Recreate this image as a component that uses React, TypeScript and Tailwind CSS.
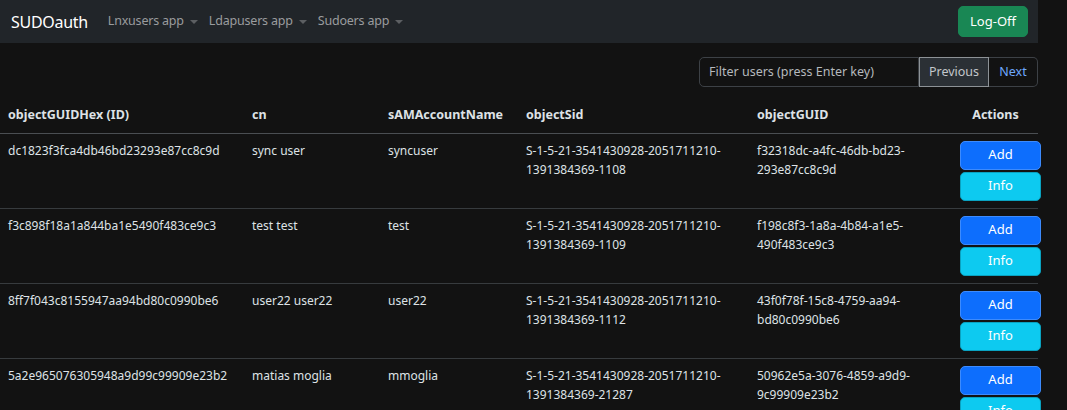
import React from 'react';

interface LdapUser {
  id: string;
  cn: string;
  sam: string;
  sid: string[];
  guid: string[];
}

const users: LdapUser[] = [
  {
    id: 'dc1823f3fca4db46bd23293e87cc8c9d',
    cn: 'sync user',
    sam: 'syncuser',
    sid: ['S-1-5-21-3541430928-2051711210-', '1391384369-1108'],
    guid: ['f32318dc-a4fc-46db-bd23-', '293e87cc8c9d'],
  },
  {
    id: 'f3c898f18a1a844ba1e5490f483ce9c3',
    cn: 'test test',
    sam: 'test',
    sid: ['S-1-5-21-3541430928-2051711210-', '1391384369-1109'],
    guid: ['f198c8f3-1a8a-4b84-a1e5-', '490f483ce9c3'],
  },
  {
    id: '8ff7f043c8155947aa94bd80c0990be6',
    cn: 'user22 user22',
    sam: 'user22',
    sid: ['S-1-5-21-3541430928-2051711210-', '1391384369-1112'],
    guid: ['43f0f78f-15c8-4759-aa94-', 'bd80c0990be6'],
  },
  {
    id: '5a2e965076305948a9d99c99909e23b2',
    cn: 'matias moglia',
    sam: 'mmoglia',
    sid: ['S-1-5-21-3541430928-2051711210-', '1391384369-21287'],
    guid: ['50962e5a-3076-4859-a9d9-', '9c99909e23b2'],
  },
];

function Caret() {
  return (
    <span className="ml-[6px] inline-block h-0 w-0 border-x-[4px] border-t-[4px] border-x-transparent border-t-[#5c5f62] align-middle" />
  );
}

export default function App() {
  return (
    <div className="h-[410px] overflow-hidden bg-[#121212] font-['Noto_Sans',sans-serif] text-[12px] text-[#dee2e6]">
      <div className="w-[1038px]">
        <nav className="flex h-[43px] items-center bg-[#212529] pl-[11px] pr-[10px]">
          <span className="mr-[20px] text-[16px] tracking-[-0.3px] text-white">SUDOauth</span>
          <div className="flex items-center gap-[11px] text-[12.5px] tracking-[-0.2px] text-[#9a9c9e]">
            <span>Lnxusers app<Caret /></span>
            <span>Ldapusers app<Caret /></span>
            <span>Sudoers app<Caret /></span>
          </div>
          <button className="ml-auto h-[31px] rounded-[5px] border border-[#198754] bg-[#198754] px-[11px] text-[13px] text-white">
            Log-Off
          </button>
        </nav>

        <div className="mt-[14px] flex justify-end">
          <div className="flex h-[30px] text-[12.5px]">
            <input
              className="w-[220px] rounded-l-[5px] border border-[#3d4146] bg-[#121212] px-[9px] text-[#dee2e6] placeholder-[#b5b9bd] outline-none"
              placeholder="Filter users (press Enter key)"
            />
            <button className="w-[70px] border border-[#8d9296] bg-[#2b3035] text-[#c3c7cb]">Previous</button>
            <button className="w-[49px] rounded-r-[5px] border border-l-0 border-[#3d4146] text-[#6ea8fe]">Next</button>
          </div>
        </div>

        <table className="mt-[10px] w-full table-fixed border-collapse leading-[19.5px]">
          <colgroup>
            <col className="w-[244px]" />
            <col className="w-[136px]" />
            <col className="w-[138px]" />
            <col className="w-[231px]" />
            <col className="w-[204px]" />
            <col />
          </colgroup>
          <thead>
            <tr className="border-b border-[#4a4e52] text-left text-[12.5px] font-bold">
              <th className="p-2">objectGUIDHex (ID)</th>
              <th className="p-2">cn</th>
              <th className="p-2">sAMAccountName</th>
              <th className="p-2">objectSid</th>
              <th className="p-2">objectGUID</th>
              <th className="p-2 text-center">Actions</th>
            </tr>
          </thead>
          <tbody>
            {users.map((u) => (
              <tr key={u.id} className="border-b border-[#373b3e] align-top">
                <td className="px-2 py-[7px]">{u.id}</td>
                <td className="px-2 py-[7px]">{u.cn}</td>
                <td className="px-2 py-[7px]">{u.sam}</td>
                <td className="px-2 py-[7px]">
                  {u.sid[0]}
                  <br />
                  {u.sid[1]}
                </td>
                <td className="px-2 py-[7px]">
                  {u.guid[0]}
                  <br />
                  {u.guid[1]}
                </td>
                <td className="py-[7px] pl-[7px] pr-0">
                  <div className="flex w-[81px] flex-col gap-[2px] text-[13px]">
                    <button className="h-[29px] rounded-[5px] border border-[#3d8bfd] bg-[#0d6efd] text-white">Add</button>
                    <button className="h-[29px] rounded-[5px] border border-[#0aa2c0] bg-[#0dcaf0] text-white">Info</button>
                  </div>
                </td>
              </tr>
            ))}
          </tbody>
        </table>
      </div>
    </div>
  );
}
